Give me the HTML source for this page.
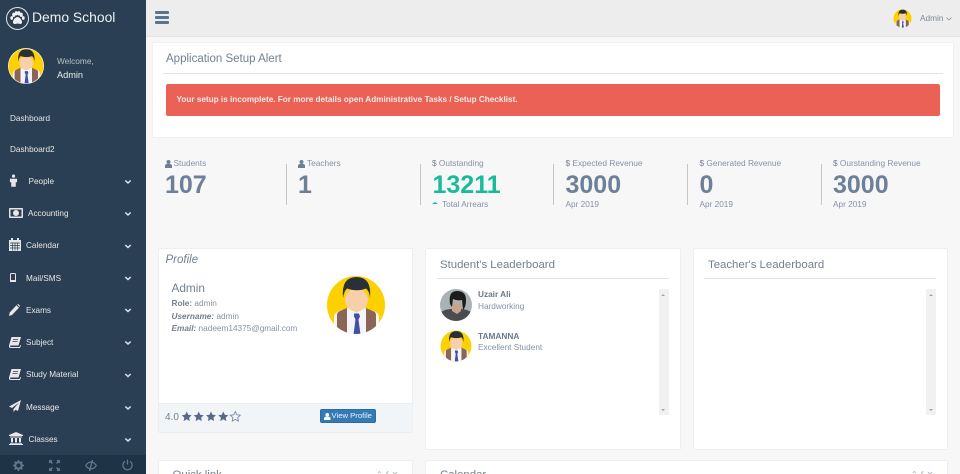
<!DOCTYPE html>
<html lang="en"><head><meta charset="utf-8"><title>Demo School</title>
<style>
html,body{margin:0;padding:0;width:960px;height:474px;overflow:hidden;background:#f7f7f7;font-family:"Liberation Sans",sans-serif;color:#73879c}
#w{position:relative;width:960px;height:474px;overflow:hidden}
.a,.t,svg.i{position:absolute}
.t{white-space:nowrap;line-height:1}
.card{position:absolute;background:#fff;border:1px solid #eceff1;box-sizing:border-box;border-radius:2px}
.n{font-size:8.2px;color:#e7e7e7}
.lab{font-size:8.3px;color:#8592a6}
.num{font-size:25px;font-weight:700;color:#6c8098}
.sub{font-size:8.25px;color:#8592a6}
.div{position:absolute;top:164px;width:1.4px;height:41px;background:#c3c6c8}
.hd{font-size:11.4px;color:#73808f}
.sb{position:absolute;top:289px;width:10px;height:126px;background:#f1f1f1}
</style></head><body><div id="w">
<svg width="0" height="0" style="position:absolute"><symbol id="av" viewBox="0 0 60 60">
<circle cx="30" cy="30" r="30" fill="#fff"/><circle cx="30" cy="30" r="29" fill="#fdd000"/>
<clipPath id="cp"><circle cx="30" cy="30" r="29"/></clipPath>
<g clip-path="url(#cp)"><path d="M8 60V42q0-4 5-6l12-4h11l12 4q5 2 5 6v18z" fill="#f4f5f8"/>
<path d="M11 60V40q0-3 3-4l7-3v27zM50 60V40q0-3-3-4l-7-3v27z" fill="#8b6555"/>
<path d="M21 35l4-3h11l4 3v25H21z" fill="#f4f5f8"/>
<path d="M25 29h11v4l-5.500 5-5.500-5z" fill="#f0c7a0"/>
<path d="M28 38.500h5l1 3-1.500 3 2 15h-7l2-15-1.500-3z" fill="#3f51a8"/>
<ellipse cx="30.500" cy="25" rx="11.500" ry="11.500" fill="#f7cfa8"/>
<path d="M17 23Q15 2 30.500 2T44 23Q43.500 16 40 13.500 31 17 21 13.500 18 16 17 23z" fill="#2a3038"/></g></symbol></svg>

<!-- sidebar -->
<div class="a" style="left:0;top:0;width:145.500px;height:474px;background:#2a3f54"></div>
<div class="a" style="left:6px;top:7px;width:21px;height:21px;border:1px solid #e7e7e7;border-radius:50%"></div>
<svg class="i" style="left:10px;top:11px" width="15" height="14" viewBox="0 0 15 14" fill="#f2f2f2"><ellipse cx="3.800" cy="3.800" rx="1.600" ry="2.200"/><ellipse cx="11.200" cy="3.800" rx="1.600" ry="2.200"/><ellipse cx="6.200" cy="2.300" rx="1.500" ry="2.200"/><ellipse cx="8.800" cy="2.300" rx="1.500" ry="2.200"/><ellipse cx="1.700" cy="7" rx="1.400" ry="1.900"/><ellipse cx="13.300" cy="7" rx="1.400" ry="1.900"/><path d="M7.500 6c2 0 4.500 3 4.500 5s-1.500 2-2 2-1.500-.5-2.500-.5-2 .5-2.500.5-2 0-2-2 2.500-5 4.500-5z"/></svg>
<div class="t" style="left:32px;top:10.500px;font-size:13.900px;color:#ecf0f1">Demo School</div>
<svg class="i" style="left:8px;top:48px" width="36" height="36"><use href="#av"/></svg>
<div class="t" style="left:57px;top:56.500px;font-size:8.300px;color:#b9c1c8">Welcome,</div>
<div class="t" style="left:57px;top:70.500px;font-size:9.200px;color:#ecf0f1">Admin</div>

<div class="t n" style="left:10px;top:114.500px">Dashboard</div>
<div class="t n" style="left:10px;top:146px">Dashboard2</div>
<div class="t n" style="left:28.500px;top:177.500px">People</div>
<div class="t n" style="left:28px;top:209.500px">Accounting</div>
<div class="t n" style="left:26px;top:242px">Calendar</div>
<div class="t n" style="left:26px;top:274.500px">Mail/SMS</div>
<div class="t n" style="left:26px;top:306.500px">Exams</div>
<div class="t n" style="left:26px;top:339px">Subject</div>
<div class="t n" style="left:26px;top:371px">Study Material</div>
<div class="t n" style="left:26px;top:403.500px">Message</div>
<div class="t n" style="left:28.500px;top:435.500px">Classes</div>

<!-- chevrons -->
<svg class="i" style="left:124px;top:170.500px" width="8" height="280" fill="none" stroke="#dfe3e6" stroke-width="1.500"><path d="M1.300 9.500L4 12l2.700-2.500M1.300 41.500L4 44l2.700-2.500M1.300 74L4 76.500 6.700 74M1.300 106L4 108.500 6.700 106M1.300 138L4 140.500 6.700 138M1.300 170.500L4 173l2.700-2.500M1.300 203L4 205.500 6.700 203M1.300 235.500L4 238l2.700-2.500M1.300 267.500L4 270l2.700-2.500"/></svg>

<!-- nav icons -->
<svg class="i" style="left:8.500px;top:174px" width="9" height="13" viewBox="0 0 10 14" fill="#e7e7e7"><circle cx="5" cy="2.200" r="1.800"/><path d="M1 5h8v4H7.500v5h-5V9H1z"/></svg>
<svg class="i" style="left:9px;top:208px" width="14" height="10" viewBox="0 0 14 10"><rect width="14" height="10" rx="1" fill="#e7e7e7"/><rect x="1.500" y="1.500" width="11" height="7" fill="#2a3f54"/><circle cx="7" cy="5" r="3" fill="#e7e7e7"/></svg>
<svg class="i" style="left:9px;top:238px" width="12" height="13" viewBox="0 0 12 13" fill="#e7e7e7"><path d="M0 2h2V0h2v2h4V0h2v2h2v11H0z"/><path d="M1 5h10M1 7.500h10M1 10h10M3.500 4.500v8M6 4.500v8M8.500 4.500v8" stroke="#2a3f54" stroke-width=".7"/></svg>
<svg class="i" style="left:9.500px;top:273px" width="6" height="9" viewBox="0 0 6 9"><rect x=".5" y=".5" width="5" height="8" rx="1" fill="none" stroke="#e7e7e7"/><rect x="0" y="7" width="6" height="2" fill="#e7e7e7"/></svg>
<svg class="i" style="left:9px;top:304px" width="11" height="12" viewBox="0 0 11 12" fill="#e7e7e7"><path d="M0 12l.7-3.500L7.500 1.200 10 3.700 3 11z"/><path d="M8.200.6l1-.6L11 1.800l-.4 1.100z"/></svg>
<svg class="i" style="left:9px;top:337px" width="12" height="11" viewBox="0 0 12 11"><path d="M2.500 0H12L9.500 8.500H1.500Q.5 10 2 10h8.500l.7-2 .8.500-1 2.500H2Q-.5 11 0 8.500z" fill="#e7e7e7"/><path d="M4 2.500h5M3.500 4.500h5" stroke="#2a3f54" stroke-width=".7"/></svg>
<svg class="i" style="left:9px;top:369px" width="12" height="11" viewBox="0 0 12 11"><path d="M2.500 0H12L9.500 8.500H1.500Q.5 10 2 10h8.500l.7-2 .8.500-1 2.500H2Q-.5 11 0 8.500z" fill="#e7e7e7"/><path d="M4 2.500h5M3.500 4.500h5" stroke="#2a3f54" stroke-width=".7"/></svg>
<svg class="i" style="left:9px;top:400px" width="12" height="12" viewBox="0 0 12 12"><path d="M12 0L0 6.500l3 1.500L10 2.500 4.500 9v3l2-2.200 2.500 1.200z" fill="#e7e7e7"/></svg>
<svg class="i" style="left:9px;top:432px" width="14" height="13" viewBox="0 0 14 13" fill="#e7e7e7"><path d="M7 0l7 3v1H0V3z"/><path d="M1 4.500h12v1H1zM2 6h2v4.500H2zM6 6h2v4.500H6zM10 6h2v4.500h-2zM1 11h12v.8H1zM0 12h14v1H0z"/></svg>

<!-- sidebar footer -->
<div class="a" style="left:0;top:455px;width:145.500px;height:19px;background:#1f3347"></div>
<svg class="i" style="left:13px;top:460px" width="11" height="11" viewBox="0 0 11 11"><circle cx="5.500" cy="5.500" r="3.200" fill="none" stroke="#5f7a90" stroke-width="2"/><path d="M5.500 0v11M0 5.500h11M1.600 1.600l7.800 7.800M9.400 1.600l-7.800 7.800" stroke="#5f7a90" stroke-width="1.500" stroke-dasharray="2 7"/></svg>
<svg class="i" style="left:49px;top:460px" width="11" height="11" viewBox="0 0 11 11" fill="none" stroke="#5f7a90" stroke-width="1.300"><path d="M.7 3V.7H3M1 1l2.500 2.500M8 .7h2.300V3M10 1L7.500 3.500M.7 8v2.300H3M1 10l2.500-2.500M8 10.300h2.300V8M10 10L7.500 7.500"/></svg>
<svg class="i" style="left:85px;top:460px" width="12" height="11" viewBox="0 0 12 11" fill="none" stroke="#5f7a90" stroke-width="1.200"><path d="M.7 5.500Q3 2 6 2t5.300 3.500Q9 9 6 9T.7 5.500z"/><path d="M7.500 0L4.500 11" stroke-width="1.400"/></svg>
<svg class="i" style="left:122px;top:459px" width="11" height="12" viewBox="0 0 11 12" fill="none" stroke="#5f7a90" stroke-width="1.200"><path d="M5.500 .5v5M3 2.300a4.600 4.600 0 1 0 5 0"/></svg>

<!-- topbar -->
<div class="a" style="left:145.500px;top:0;width:814.500px;height:37px;background:#ededed;border-bottom:1px solid #e6e6e6;box-sizing:border-box"></div>
<div class="a" style="left:154.500px;top:11px;width:14.500px;height:3px;background:#5a738e;border-radius:1px"></div>
<div class="a" style="left:154.500px;top:16px;width:14.500px;height:3px;background:#5a738e;border-radius:1px"></div>
<div class="a" style="left:154.500px;top:21px;width:14.500px;height:3px;background:#5a738e;border-radius:1px"></div>
<svg class="i" style="left:893px;top:9px" width="19" height="19"><use href="#av"/></svg>
<div class="t" style="left:920px;top:14px;font-size:8.300px;color:#7d8a97">Admin</div>
<svg class="i" style="left:945.500px;top:16.500px" width="6" height="4" fill="none" stroke="#8a96a2" stroke-width=".8"><path d="M.5 .5L3 3 5.500 .5"/></svg>

<!-- alert panel -->
<div class="card" style="left:152px;top:42px;width:802px;height:96px;border-color:#f0f0f0"></div>
<div class="t" style="left:166px;top:53.500px;font-size:11.500px;color:#73808f">Application Setup Alert</div>
<div class="a" style="left:163px;top:73px;width:780px;height:1px;background:#e2e5ea"></div>
<div class="a" style="left:166px;top:84px;width:774px;height:32px;background:#ec6155;border-radius:2px"></div>
<div class="t" style="left:176.500px;top:96.300px;font-size:8.200px;font-weight:700;color:#f6e9e7">Your setup is incomplete. For more details open Administrative Tasks / Setup Checklist.</div>

<!-- stats -->
<div class="div" style="left:285.500px"></div>
<div class="div" style="left:419.500px"></div>
<div class="div" style="left:553px"></div>
<div class="div" style="left:687px"></div>
<div class="div" style="left:820.500px"></div>

<svg class="i" style="left:164.500px;top:159.500px" width="7" height="8" viewBox="0 0 7 8" fill="#6c8098"><circle cx="3.500" cy="2" r="2"/><path d="M0 8V6q0-2 2-2h3q2 0 2 2v2z"/></svg>
<div class="t lab" style="left:173.500px;top:159px">Students</div>
<div class="t num" style="left:165px;top:172.500px">107</div>
<svg class="i" style="left:298px;top:159.500px" width="7" height="8" viewBox="0 0 7 8" fill="#6c8098"><circle cx="3.500" cy="2" r="2"/><path d="M0 8V6q0-2 2-2h3q2 0 2 2v2z"/></svg>
<div class="t lab" style="left:307px;top:159px">Teachers</div>
<div class="t num" style="left:298px;top:172.500px">1</div>

<div class="t lab" style="left:432px;top:159px"><span style="color:#73808f">$</span> Outstanding</div>
<div class="t num" style="left:432.500px;top:172.500px;color:#1abb9c">13211</div>
<div class="a" style="left:432px;top:201.500px;width:0;height:0;border-left:3px solid transparent;border-right:3px solid transparent;border-bottom:2.500px solid #1abb9c"></div>
<div class="t sub" style="left:442px;top:200.500px">Total Arrears</div>

<div class="t lab" style="left:565.500px;top:159px"><span style="color:#73808f">$</span> Expected Revenue</div>
<div class="t num" style="left:565.500px;top:172.500px">3000</div>
<div class="t sub" style="left:565.500px;top:200.500px">Apr 2019</div>

<div class="t lab" style="left:699.500px;top:159px"><span style="color:#73808f">$</span> Generated Revenue</div>
<div class="t num" style="left:699.500px;top:172.500px">0</div>
<div class="t sub" style="left:699.500px;top:200.500px">Apr 2019</div>

<div class="t lab" style="left:833px;top:159px"><span style="color:#73808f">$</span> Ourstanding Revenue</div>
<div class="t num" style="left:833px;top:172.500px">3000</div>
<div class="t sub" style="left:833px;top:200.500px">Apr 2019</div>

<!-- profile -->
<div class="card" style="left:158px;top:248px;width:255px;height:185px"></div>
<div class="a" style="left:159px;top:403px;width:253px;height:29px;background:#f2f5f7;border-top:1px solid #e9edef;box-sizing:border-box"></div>
<div class="t" style="left:165.500px;top:254.500px;font-size:11.500px;font-style:italic;color:#73808f">Profile</div>
<div class="t" style="left:171.500px;top:282.500px;font-size:11.800px;color:#73808f">Admin</div>
<div class="t sub" style="left:171.500px;top:300px"><b style="color:#73808f">Role:</b> admin</div>
<div class="t sub" style="left:171.500px;top:313px"><b style="color:#73808f"><i>Username:</i></b> admin</div>
<div class="t sub" style="left:171.500px;top:325px"><b style="color:#73808f"><i>Email:</i></b> nadeem14375@gmail.com</div>
<svg class="i" style="left:325.500px;top:274.500px" width="60" height="60"><use href="#av"/></svg>
<div class="t" style="left:165px;top:412.500px;font-size:10px;color:#73808f">4.0</div>
<svg class="i" style="left:180px;top:410px" width="62" height="13" viewBox="0 0 62 13">
<g fill="#56698a"><path d="M6.700 1.500l1.500 3.300 3.500.4-2.600 2.400.7 3.500-3.100-1.800-3.100 1.800.7-3.500-2.600-2.400 3.500-.4z"/>
<path transform="translate(12 0)" d="M6.700 1.500l1.500 3.300 3.500.4-2.600 2.400.7 3.500-3.100-1.800-3.100 1.800.7-3.500-2.600-2.400 3.500-.4z"/>
<path transform="translate(24.300 0)" d="M6.700 1.500l1.500 3.300 3.500.4-2.600 2.400.7 3.500-3.100-1.800-3.100 1.800.7-3.500-2.600-2.400 3.500-.4z"/>
<path transform="translate(36.600 0)" d="M6.700 1.500l1.500 3.300 3.500.4-2.600 2.400.7 3.500-3.100-1.800-3.100 1.800.7-3.500-2.600-2.400 3.500-.4z"/></g>
<path transform="translate(48.600 0)" fill="none" stroke="#6c7f99" stroke-width=".8" d="M6.700 1.500l1.500 3.300 3.500.4-2.600 2.400.7 3.500-3.100-1.800-3.100 1.800.7-3.500-2.600-2.400 3.500-.4z"/></svg>
<div class="a" style="left:320px;top:409px;width:56px;height:14px;background:#337ab7;border-radius:2px;border:1px solid #2e6da4;box-sizing:border-box"></div>
<svg class="i" style="left:324px;top:412.500px" width="6.500" height="7.500" viewBox="0 0 7 8" fill="#fff"><circle cx="3.500" cy="2" r="2"/><path d="M0 8V6q0-2 2-2h3q2 0 2 2v2z"/></svg>
<div class="t" style="left:331.500px;top:412.300px;font-size:7.700px;color:#eef4f9">View Profile</div>

<!-- student leaderboard -->
<div class="card" style="left:425px;top:248px;width:256px;height:202px"></div>
<div class="t hd" style="left:440px;top:259.800px">Student's Leaderboard</div>
<div class="a" style="left:437px;top:278px;width:232px;height:1px;background:#e2e5ea"></div>
<svg class="i" style="left:440px;top:289px" width="32" height="32" viewBox="0 0 32 32"><clipPath id="c2"><circle cx="16" cy="16" r="16"/></clipPath><g clip-path="url(#c2)"><rect width="32" height="32" fill="#aab2b5"/><path d="M0 32v-8q3-3 10-4h12q7 1 10 4v8z" fill="#4a4d50"/><path d="M12 14h9v8l-4 3-5-3z" fill="#c9a48a"/><path d="M10 15Q8 2 17 2t9 9q0 7-3 10l-1-10q-5 1-9-1l-1 8z" fill="#1d1c1d"/></g></svg>
<div class="t" style="left:478px;top:291px;font-size:8.250px;font-weight:700;color:#6b788c">Uzair Ali</div>
<div class="t sub" style="left:478px;top:302.800px">Hardworking</div>
<svg class="i" style="left:440px;top:330px" width="32" height="32"><use href="#av"/></svg>
<div class="t" style="left:478px;top:331.500px;font-size:8.300px;font-weight:700;color:#6b788c">TAMANNA</div>
<div class="t sub" style="left:478px;top:343.800px">Excellent Student</div>
<div class="sb" style="left:658.500px"></div>
<div class="a" style="left:661px;top:293.500px;border-left:2.500px solid transparent;border-right:2.500px solid transparent;border-bottom:2.500px solid #a3a3a3;width:0;height:0"></div>
<div class="a" style="left:661px;top:408.500px;border-left:2.500px solid transparent;border-right:2.500px solid transparent;border-top:2.500px solid #a3a3a3;width:0;height:0"></div>

<!-- teacher leaderboard -->
<div class="card" style="left:693px;top:248px;width:255px;height:202px"></div>
<div class="t hd" style="left:708px;top:259.800px">Teacher's Leaderboard</div>
<div class="a" style="left:704px;top:278px;width:232px;height:1px;background:#e2e5ea"></div>
<div class="sb" style="left:926px"></div>
<div class="a" style="left:928.500px;top:293.500px;border-left:2.500px solid transparent;border-right:2.500px solid transparent;border-bottom:2.500px solid #a3a3a3;width:0;height:0"></div>
<div class="a" style="left:928.500px;top:408.500px;border-left:2.500px solid transparent;border-right:2.500px solid transparent;border-top:2.500px solid #a3a3a3;width:0;height:0"></div>

<!-- bottom cards -->
<div class="card" style="left:158px;top:460px;width:255px;height:30px"></div>
<div class="t hd" style="left:172.500px;top:470px">Quick link</div>
<div class="card" style="left:425px;top:460px;width:523px;height:30px"></div>
<div class="t hd" style="left:440px;top:470px">Calendar</div>
<div class="t" style="left:376px;top:471px;font-size:8px;color:#a8b1bb">⌃ ƒ ✕</div>
<div class="t" style="left:911px;top:471px;font-size:8px;color:#a8b1bb">⌃ ƒ ✕</div>
</div></body></html>
